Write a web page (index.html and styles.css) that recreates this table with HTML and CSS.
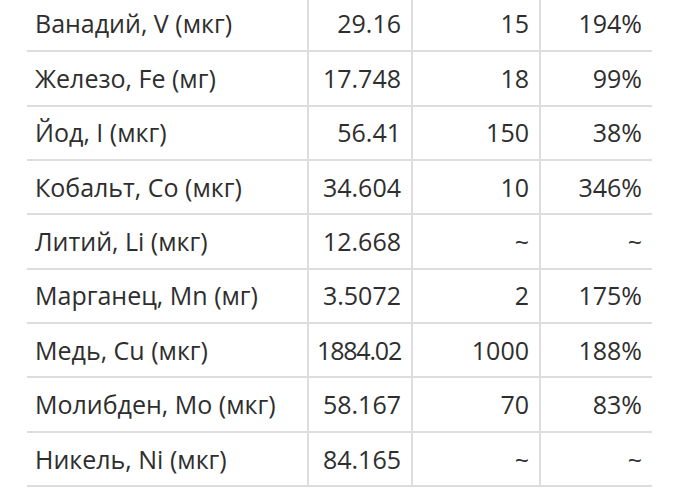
FILE: index.html
```html
<!DOCTYPE html>
<html lang="ru">
<head>
<meta charset="utf-8">
<link rel="stylesheet" href="styles.css">
</head>
<body>
<table class="nutr">
  <tbody>
    <tr><td class="name">Ванадий, V (мкг)</td><td class="num">29.16</td><td class="num">15</td><td class="num">194%</td></tr>
    <tr><td class="name">Железо, Fe (мг)</td><td class="num">17.748</td><td class="num">18</td><td class="num">99%</td></tr>
    <tr><td class="name">Йод, I (мкг)</td><td class="num">56.41</td><td class="num">150</td><td class="num">38%</td></tr>
    <tr><td class="name">Кобальт, Co (мкг)</td><td class="num">34.604</td><td class="num">10</td><td class="num">346%</td></tr>
    <tr><td class="name">Литий, Li (мкг)</td><td class="num">12.668</td><td class="num">~</td><td class="num">~</td></tr>
    <tr><td class="name">Марганец, Mn (мг)</td><td class="num">3.5072</td><td class="num">2</td><td class="num">175%</td></tr>
    <tr><td class="name">Медь, Cu (мкг)</td><td class="num tight">1884.02</td><td class="num">1000</td><td class="num">188%</td></tr>
    <tr><td class="name">Молибден, Mo (мкг)</td><td class="num">58.167</td><td class="num">70</td><td class="num">83%</td></tr>
    <tr><td class="name">Никель, Ni (мкг)</td><td class="num">84.165</td><td class="num">~</td><td class="num">~</td></tr>
  </tbody>
</table>
</body>
</html>
```
FILE: styles.css
```css
html, body {
  margin: 0;
  padding: 0;
  background: #ffffff;
}
body {
  font-family: "Open Sans", "DejaVu Sans", sans-serif;
  color: #2e2e2e;
  font-size: 25px;
}
.nutr {
  border-collapse: collapse;
  table-layout: fixed;
  width: 625px;
  margin: -3.2px 0 0 27px;
}
.nutr td {
  height: 54.375px;
  box-sizing: border-box;
  padding: 0 10px 0 8px;
  border-bottom: 2px solid #dddde0;
  border-left: 2px solid #dddde0;
  white-space: nowrap;
  vertical-align: middle;
  line-height: 1;
}
.nutr td:first-child {
  border-left: none;
  width: 281px;
}
.nutr td:nth-child(2) { width: 104px; }
.nutr td:nth-child(3) { width: 128px; }
.nutr td:nth-child(4) { width: 112px; }
.num {
  text-align: right;
}
.tight {
  letter-spacing: -1.2px;
}
```
